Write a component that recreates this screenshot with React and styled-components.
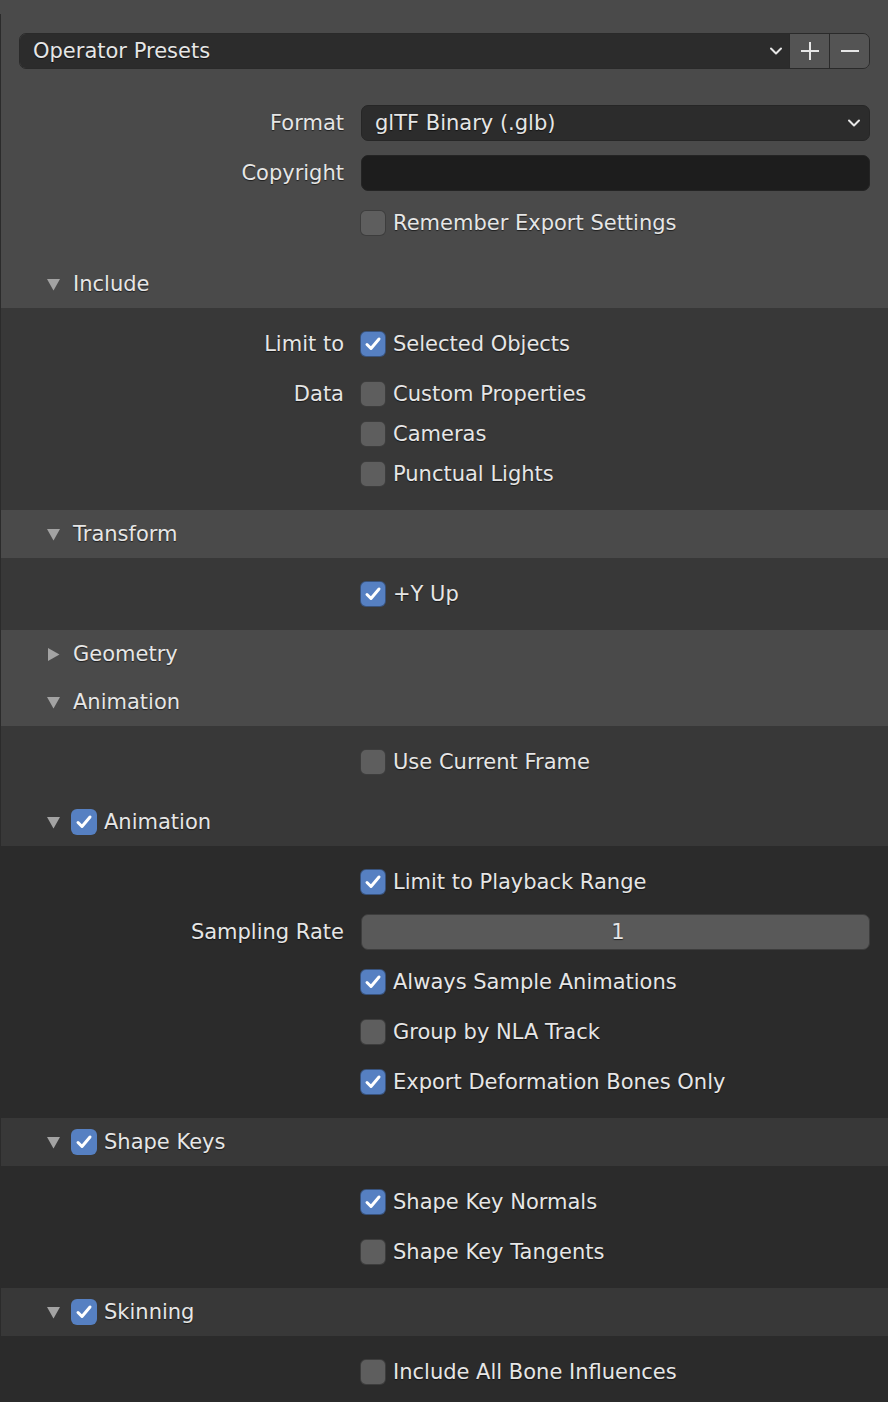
import React from 'react'
import styled, { createGlobalStyle } from 'styled-components'

const GlobalStyle = createGlobalStyle`
  html, body {
    margin: 0;
    padding: 0;
    background: #4a4a4a;
  }
  body {
    font-family: "DejaVu Sans", "Liberation Sans", sans-serif;
    font-size: 21px;
    color: #e6e6e6;
  }
`

const Page = styled.div`
  min-height: 1402px;
  background: #4a4a4a;
  padding-top: 14px;
  box-sizing: border-box;
  overflow: hidden;
`

const Frame = styled.div`
  border-left: 1px solid #2b2b2b;
  min-height: 1388px;
`

const Top = styled.div`
  padding: 17px 18px 17px 18px;
`

const Text = styled.span`
  color: #e6e6e6;
  text-shadow: 0 1px 1px rgba(0, 0, 0, 0.6);
  white-space: nowrap;
  line-height: 1;
`

const PresetRow = styled.div`
  height: 40px;
  display: flex;
  align-items: center;
  margin-bottom: 32px;
`

const PresetGroup = styled.div`
  flex: 1;
  display: flex;
  height: 36px;
  border-radius: 7px;
  border: 1px solid #2a2a2a;
  overflow: hidden;
  box-sizing: border-box;
`

const PresetSelect = styled.div`
  flex: 1;
  display: flex;
  align-items: center;
  justify-content: space-between;
  background: #2c2c2c;
  padding: 0 6px 0 13px;
`

const PresetButton = styled.div`
  width: 39px;
  display: flex;
  align-items: center;
  justify-content: center;
  background: #545454;
  border-left: 1px solid #2a2a2a;
`

const Form = styled.div`
  display: flex;
  flex-direction: column;
  gap: 10px;
  padding: ${p => (p.$pad ? '16px 18px 16px 18px' : '0')};
  background: ${p => p.$bg || 'transparent'};
`

const Row = styled.div`
  display: grid;
  grid-template-columns: 325px 1fr;
  column-gap: 17px;
  align-items: start;
`

const Label = styled(Text)`
  height: 40px;
  display: flex;
  align-items: center;
  justify-content: flex-end;
`

const Stack = styled.div`
  display: flex;
  flex-direction: column;
`

const Field = styled.div`
  height: 36px;
  margin: 2px 0;
  border-radius: 7px;
  box-sizing: border-box;
  display: flex;
  align-items: center;
  justify-content: ${p => (p.$center ? 'center' : 'space-between')};
  padding: 0 8px 0 13px;
  background: ${p => p.$bg};
  border: 1px solid ${p => p.$border || 'transparent'};
`

const CheckRow = styled.label`
  height: 40px;
  display: flex;
  align-items: center;
  gap: 7px;
  margin-left: -1px;
`

const Box = styled.span`
  width: 26px;
  height: 26px;
  box-sizing: border-box;
  border-radius: 6px;
  border: 1px solid ${p => (p.$plain ? 'transparent' : 'rgba(0, 0, 0, 0.35)')};
  background: ${p => (p.$on ? '#5680c2' : '#5e5e5e')};
  display: flex;
  align-items: center;
  justify-content: center;
  flex-shrink: 0;
`

const Header = styled.div`
  height: 48px;
  display: flex;
  align-items: center;
  padding-left: 46px;
`

const Arrow = styled.span`
  width: 13px;
  height: 13px;
  display: flex;
  align-items: center;
  justify-content: center;
  margin-right: ${p => (p.$tight ? 11 : 13)}px;
`

const HeaderBox = styled(Box)`
  margin-right: 7px;
`

const Body = styled.div`
  background: ${p => p.$bg};
`

const Chevron = () => (
  <svg width="14" height="10" viewBox="0 0 14 10">
    <polyline points="2,2.5 7,7.5 12,2.5" fill="none" stroke="#e6e6e6" strokeWidth="2" strokeLinecap="round" strokeLinejoin="round" />
  </svg>
)

const Tick = () => (
  <svg width="18" height="18" viewBox="0 0 18 18">
    <polyline points="3,9.5 7,13.5 15,4" fill="none" stroke="#fff" strokeWidth="3" strokeLinecap="round" strokeLinejoin="round" />
  </svg>
)

const Tri = ({ open }) => (
  <svg width="13" height="13" viewBox="0 0 13 13">
    {open
      ? <polygon points="0,1 13,1 6.5,12.5" fill="#a3a3a3" />
      : <polygon points="1,0 12.5,6.5 1,13" fill="#a3a3a3" />}
  </svg>
)

function Check({ on, children }) {
  return (
    <CheckRow>
      <Box $on={on}>{on && <Tick />}</Box>
      <Text>{children}</Text>
    </CheckRow>
  )
}

function SectionHeader({ open = true, check, children }) {
  return (
    <Header>
      <Arrow $tight={check !== undefined}><Tri open={open} /></Arrow>
      {check !== undefined && <HeaderBox $on={check} $plain>{check && <Tick />}</HeaderBox>}
      <Text>{children}</Text>
    </Header>
  )
}

function Prop({ label, children }) {
  return (
    <Row>
      <Label>{label}</Label>
      <div>{children}</div>
    </Row>
  )
}

const LV1 = '#383838'
const LV2 = '#2b2b2b'

export default function App() {
  return (
    <Page>
      <GlobalStyle />
      <Frame>
        <Top>
          <PresetRow>
            <PresetGroup>
              <PresetSelect>
                <Text>Operator Presets</Text>
                <Chevron />
              </PresetSelect>
              <PresetButton>
                <svg width="20" height="20" viewBox="0 0 20 20">
                  <path d="M10 1v18M1 10h18" stroke="#e6e6e6" strokeWidth="2" />
                </svg>
              </PresetButton>
              <PresetButton>
                <svg width="20" height="20" viewBox="0 0 20 20">
                  <path d="M1 10h18" stroke="#e6e6e6" strokeWidth="2" />
                </svg>
              </PresetButton>
            </PresetGroup>
          </PresetRow>
          <Form>
            <Prop label="Format">
              <Field $bg="#2c2c2c" $border="#262626">
                <Text>glTF Binary (.glb)</Text>
                <Chevron />
              </Field>
            </Prop>
            <Prop label="Copyright">
              <Field $bg="#1d1d1d" $border="#242424" />
            </Prop>
            <Prop label="">
              <Check>Remember Export Settings</Check>
            </Prop>
          </Form>
        </Top>

        <SectionHeader>Include</SectionHeader>
        <Form $pad $bg={LV1}>
          <Prop label="Limit to">
            <Check on>Selected Objects</Check>
          </Prop>
          <Prop label="Data">
            <Stack>
              <Check>Custom Properties</Check>
              <Check>Cameras</Check>
              <Check>Punctual Lights</Check>
            </Stack>
          </Prop>
        </Form>

        <SectionHeader>Transform</SectionHeader>
        <Form $pad $bg={LV1}>
          <Prop label="">
            <Check on>+Y Up</Check>
          </Prop>
        </Form>

        <SectionHeader open={false}>Geometry</SectionHeader>
        <SectionHeader>Animation</SectionHeader>
        <Body $bg={LV1}>
          <Form $pad>
            <Prop label="">
              <Check>Use Current Frame</Check>
            </Prop>
          </Form>

          <SectionHeader check>Animation</SectionHeader>
          <Form $pad $bg={LV2}>
            <Prop label="">
              <Check on>Limit to Playback Range</Check>
            </Prop>
            <Prop label="Sampling Rate">
              <Field $bg="#595959" $border="#3d3d3d" $center>
                <Text>1</Text>
              </Field>
            </Prop>
            <Prop label="">
              <Check on>Always Sample Animations</Check>
            </Prop>
            <Prop label="">
              <Check>Group by NLA Track</Check>
            </Prop>
            <Prop label="">
              <Check on>Export Deformation Bones Only</Check>
            </Prop>
          </Form>

          <SectionHeader check>Shape Keys</SectionHeader>
          <Form $pad $bg={LV2}>
            <Prop label="">
              <Check on>Shape Key Normals</Check>
            </Prop>
            <Prop label="">
              <Check>Shape Key Tangents</Check>
            </Prop>
          </Form>

          <SectionHeader check>Skinning</SectionHeader>
          <Form $pad $bg={LV2}>
            <Prop label="">
              <Check>Include All Bone Influences</Check>
            </Prop>
          </Form>
        </Body>
      </Frame>
    </Page>
  )
}
